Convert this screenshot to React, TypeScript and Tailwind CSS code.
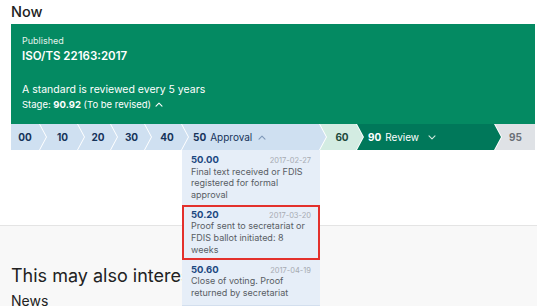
import React from "react";

type Stage = {
  code: string;
  label?: string;
  caret?: "up" | "down";
  width: string;
  tone: "blue" | "mint" | "green" | "gray";
  first?: boolean;
  last?: boolean;
};

const stages: Stage[] = [
  { code: "00", width: "w-[35px]", tone: "blue", first: true },
  { code: "10", width: "w-[44px]", tone: "blue" },
  { code: "20", width: "w-[39px]", tone: "blue" },
  { code: "30", width: "w-[40px]", tone: "blue" },
  { code: "40", width: "w-[43px]", tone: "blue" },
  { code: "50", label: "Approval", caret: "up", width: "w-[144px]", tone: "blue" },
  { code: "60", width: "w-[43px]", tone: "mint" },
  { code: "90", label: "Review", caret: "down", width: "w-[144px]", tone: "green" },
  { code: "95", width: "w-[40px]", tone: "gray", last: true },
];

const toneClass = {
  blue: "bg-[#cfe0f1] text-[#16335a]",
  mint: "bg-[#d3ece2] text-[#1c4a3b]",
  green: "bg-[#00785a] text-white",
  gray: "bg-[#dfe2e6] text-[#6b7078]",
};

const Caret = ({ dir, className }: { dir: "up" | "down"; className: string }) => (
  <svg width="8" height="5" viewBox="0 0 8 5" fill="none" className={className}>
    <path
      d={dir === "up" ? "M1 4.2 4 1.2 7 4.2" : "M1 0.8 4 3.8 7 0.8"}
      stroke="currentColor"
      strokeWidth="1.1"
      strokeLinecap="round"
      strokeLinejoin="round"
    />
  </svg>
);

const StageChip = ({ s }: { s: Stage }) => {
  const shape = s.first
    ? "[clip-path:polygon(0_0,calc(100%_-_7px)_0,100%_50%,calc(100%_-_7px)_100%,0_100%)]"
    : s.last
    ? "[clip-path:polygon(0_0,100%_0,100%_100%,0_100%,7px_50%)] ml-[-6px]"
    : "[clip-path:polygon(0_0,calc(100%_-_7px)_0,100%_50%,calc(100%_-_7px)_100%,0_100%,7px_50%)] ml-[-6px]";
  const align = s.label ? "justify-start pl-[11px]" : s.first ? "justify-center pr-[7px]" : "justify-center pl-[7px] pr-[6px]";
  return (
    <div className={`${s.width} ${shape} ${toneClass[s.tone]} ${align} h-full shrink-0 flex items-center text-[10px]`}>
      <span className="font-bold">{s.code}</span>
      {s.label && <span className="ml-[4px]">{s.label}</span>}
      {s.caret && (
        <Caret
          dir={s.caret}
          className={s.caret === "up" ? "ml-[6px] text-[#7f98b8]" : "ml-[9px] text-[#cfe7dc]"}
        />
      )}
    </div>
  );
};

type Sub = { code: string; date: string; lines: string[]; marked?: boolean };

const subs: Sub[] = [
  { code: "50.00", date: "2017-02-27", lines: ["Final text received or FDIS", "registered for formal", "approval"] },
  { code: "50.20", date: "2017-03-20", lines: ["Proof sent to secretariat or", "FDIS ballot initiated: 8", "weeks"], marked: true },
  { code: "50.60", date: "2017-04-19", lines: ["Close of voting. Proof", "returned by secretariat"] },
];

export default function App() {
  return (
    <div className="relative w-[537px] h-[306px] overflow-hidden bg-white font-['Inter',sans-serif] text-[#222]">
      <div className="pl-[11px] pr-[2px]">
        <h2 className="h-[24px] pt-[2px] text-[14.5px] leading-[20px] font-medium">Now</h2>

        <div className="h-[100px] bg-[#048a62] text-white pl-[11px] pt-[11px]">
          <p className="text-[9px] leading-[12px] text-[#e3f3ec]">Published</p>
          <p className="mt-[2px] text-[11.5px] leading-[15px] font-semibold">ISO/TS 22163:2017</p>
          <p className="mt-[19px] text-[10.5px] leading-[14px]">A standard is reviewed every 5 years</p>
          <p className="mt-[1px] flex items-center text-[9.5px] leading-[13px]">
            <span>Stage:&nbsp;</span>
            <span className="font-bold">90.92</span>
            <span>&nbsp;(To be revised)</span>
            <Caret dir="up" className="ml-[4px]" />
          </p>
        </div>

        <div className="flex h-[26px] bg-white">
          {stages.map((s) => (
            <StageChip key={s.code} s={s} />
          ))}
        </div>
      </div>

      <section className="mt-[75px] h-[200px] bg-[#f8f8f8] border-t border-[#e4e4e4] pl-[11px]">
        <h2 className="pt-[38px] text-[18px] leading-[24px] whitespace-nowrap">This may also interest you</h2>
        <h3 className="mt-[4px] text-[14px] leading-[18px]">News</h3>
      </section>

      <div className="absolute left-[182px] top-[150px] w-[138px] bg-[#e6eef8] z-10 border-b border-[#d3dfee]">
        {subs.map((s, i) => (
          <div
            key={s.code}
            className={
              s.marked
                ? "border-2 border-[#e3302c] px-[7px] py-[2px]"
                : i === subs.length - 1
                ? "px-[9px] pt-[4px] pb-[6px]"
                : "px-[9px] py-[4px]"
            }
          >
            <div className="flex items-baseline justify-between h-[11.7px] leading-[11.7px]">
              <span className="text-[9.5px] font-bold text-[#1b4781]">{s.code}</span>
              <span className="text-[7.5px] text-[#a6abb2]">{s.date}</span>
            </div>
            {s.lines.map((l) => (
              <p key={l} className="text-[9px] leading-[11.7px] text-[#585d64] whitespace-nowrap">
                {l}
              </p>
            ))}
          </div>
        ))}
      </div>
    </div>
  );
}
